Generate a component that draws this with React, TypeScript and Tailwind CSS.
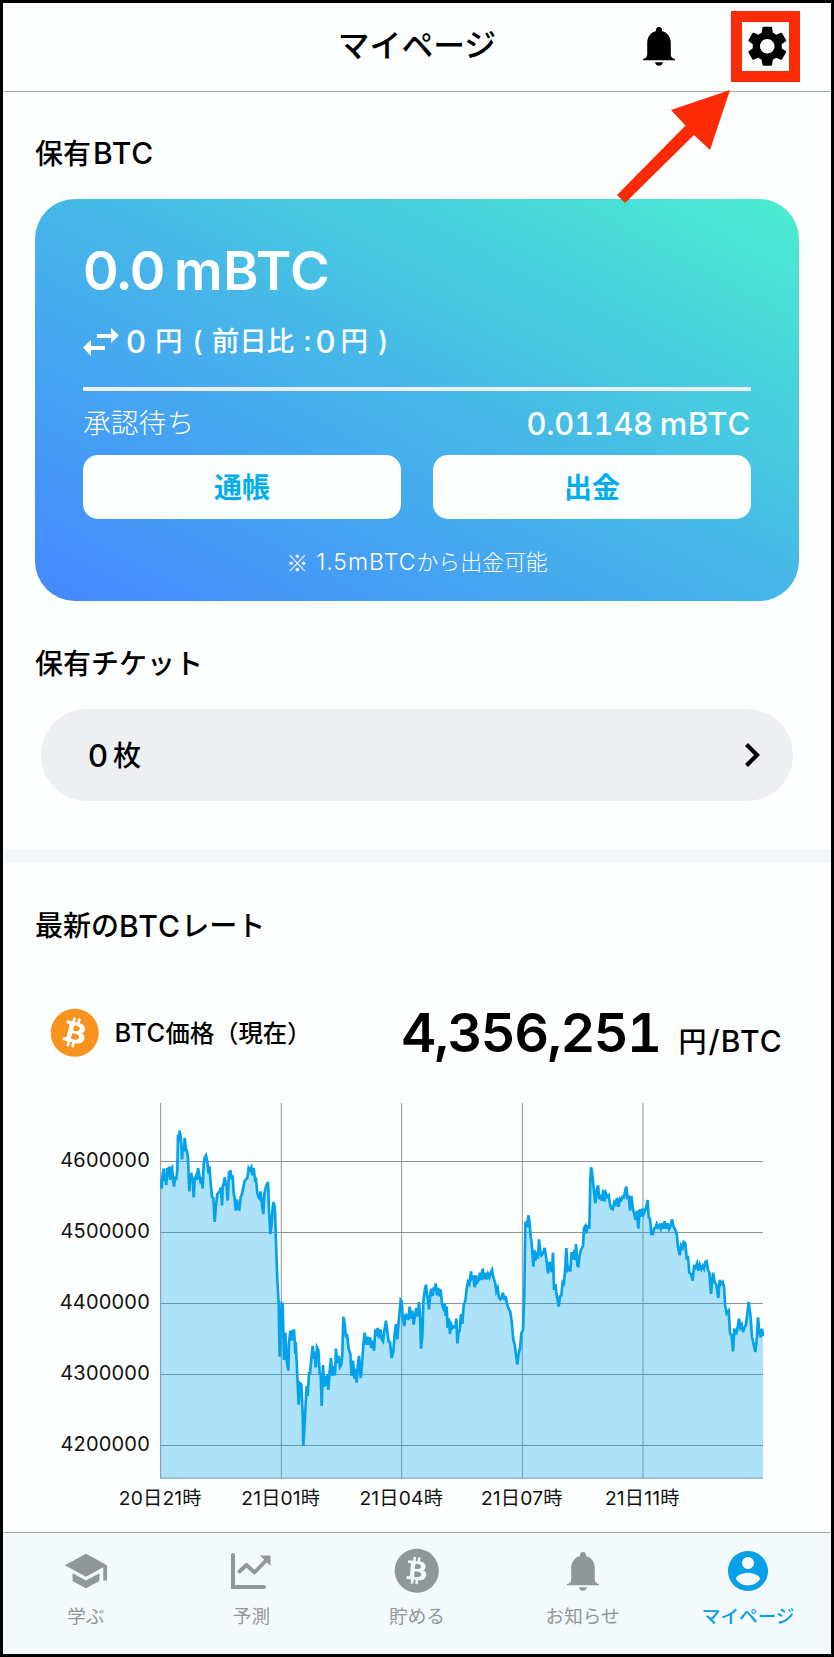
import type { ReactNode } from "react";
import { FaBitcoin } from "react-icons/fa";
import { MdSchool, MdSettings } from "react-icons/md";

// Chart space: x 61..1869 is the time span, y 39..1165 the price span.
const PRICES =
  "62,270 65,296 67,262 71,236 73,272 76,262 79,285 81,234 84,262 87,230 90,270 93,236 96,232 99,268 102,290 105,264 109,266 112,240 114,134 117,140 119,122 123,148 126,208 129,165 132,184 134,144 138,178 141,184 144,205 148,304 151,254 154,252 158,268 161,322 164,268 168,258 171,270 174,234 177,250 181,272 185,262 188,296 191,222 194,204 198,196 202,214 205,250 208,228 212,280 216,320 220,324 224,396 228,346 232,312 236,308 240,302 243,292 246,346 248,292 251,282 254,262 257,280 260,290 263,332 267,244 270,258 271,240 275,268 278,256 281,310 284,324 287,362 291,328 294,356 298,358 302,322 306,312 310,292 314,274 318,268 322,264 326,234 330,240 334,232 337,256 341,234 345,270 348,268 352,310 356,322 359,326 362,304 366,346 370,372 373,312 376,298 380,284 384,276 387,360 391,432 395,402 398,354 401,336 405,360 408,460 412,570 416,640 419,800 422,700 425,640 428,642 432,810 436,728 440,810 445,842 447,760 451,722 454,752 458,720 461,750 462,718 466,792 467,756 471,836 476,944 480,880 484,884 488,970 490,1068 495,980 500,888 503,918 507,850 510,850 514,808 518,768 521,806 524,784 527,832 531,772 535,780 539,850 542,852 545,948 549,825 553,890 556,858 559,888 562,852 565,900 569,844 573,804 577,858 581,828 585,856 588,776 592,820 596,798 600,830 604,822 607,792 610,680 614,702 618,742 621,732 626,776 631,792 635,858 639,812 643,866 646,836 650,878 654,822 657,798 662,864 666,824 670,764 674,728 678,764 682,740 686,764 690,742 694,774 698,752 702,782 706,718 710,738 713,714 717,744 721,718 725,748 729,754 733,722 738,692 742,724 746,754 750,756 755,804 760,784 764,732 768,702 772,748 776,694 779,666 782,630 785,634 788,678 793,708 797,672 801,684 805,686 809,650 813,686 817,662 821,704 825,676 829,654 833,680 837,636 840,672 843,776 847,740 850,636 854,602 858,584 861,610 865,640 867,658 871,612 874,596 878,618 881,592 885,602 887,580 891,616 895,594 899,620 902,598 906,642 910,654 914,640 917,678 920,650 923,714 926,684 930,732 934,704 938,714 942,710 946,712 949,686 952,760 955,730 959,722 963,672 967,702 971,646 976,632 980,596 984,576 988,582 993,544 996,566 1000,562 1004,592 1008,556 1012,576 1016,570 1020,548 1024,570 1028,536 1032,568 1036,548 1040,568 1044,552 1048,562 1052,548 1056,540 1060,562 1065,576 1069,604 1073,594 1077,624 1081,628 1085,622 1089,608 1093,630 1097,618 1101,642 1106,656 1111,666 1115,694 1120,750 1124,762 1128,796 1132,824 1136,790 1140,776 1144,730 1149,720 1153,610 1156,400 1160,396 1163,412 1165,376 1168,392 1172,440 1175,458 1180,530 1183,480 1187,512 1191,486 1194,506 1197,448 1200,480 1204,496 1209,490 1214,474 1219,506 1224,550 1229,516 1233,538 1236,546 1239,488 1242,600 1246,582 1250,616 1253,630 1256,650 1260,618 1264,616 1268,576 1272,580 1276,530 1279,474 1283,540 1287,534 1291,544 1295,486 1299,508 1303,480 1306,510 1308,462 1312,524 1315,532 1319,494 1324,478 1329,468 1332,414 1336,408 1339,430 1343,410 1348,412 1351,270 1353,232 1356,244 1361,294 1366,340 1370,302 1374,286 1378,328 1382,314 1386,332 1390,300 1394,334 1398,310 1402,320 1406,316 1410,342 1414,356 1418,358 1423,336 1427,342 1431,324 1436,350 1440,326 1444,330 1448,320 1452,322 1456,300 1459,290 1463,328 1466,316 1470,362 1474,318 1478,352 1483,374 1487,390 1491,362 1495,416 1499,358 1503,380 1507,356 1511,372 1515,362 1519,348 1523,330 1526,382 1530,386 1534,432 1539,432 1542,416 1546,414 1550,402 1554,412 1558,406 1562,416 1566,400 1570,416 1574,394 1579,416 1583,400 1587,418 1591,410 1596,388 1600,408 1605,418 1610,430 1614,472 1619,496 1623,466 1628,474 1631,456 1636,460 1640,504 1644,502 1648,548 1653,552 1658,572 1662,530 1666,534 1671,520 1675,542 1679,524 1684,538 1688,528 1692,536 1696,516 1700,514 1704,540 1708,548 1713,612 1719,548 1724,576 1729,584 1735,624 1739,570 1743,582 1748,576 1752,590 1756,650 1760,670 1766,662 1770,730 1775,736 1779,784 1783,716 1788,734 1793,712 1797,686 1801,712 1805,704 1809,726 1813,714 1818,704 1822,670 1826,636 1831,674 1836,740 1841,764 1846,786 1850,750 1854,682 1858,728 1862,742 1866,716 1869,738";

const Y_LABELS = ["4600000", "4500000", "4400000", "4300000", "4200000"];
const X_LABELS = ["20日21時", "21日01時", "21日04時", "21日07時", "21日11時"];

function BellIcon({ className }: { className?: string }) {
  return (
    <svg viewBox="0 0 32 39" className={className} fill="currentColor">
      <path d="M16 0c-1.8 0-3 1.3-3 3v1.1C7.800 5.500 4.200 10 4.200 16v11.500c0 2.500-1.700 4-4.200 4.400v1.300h32v-1.300c-2.500-.4-4.200-1.900-4.200-4.400V16c0-6-3.600-10.500-8.800-11.900V3c0-1.700-1.200-3-3-3z" />
      <path d="M12 35.200h8c-.6 2.300-2 3.600-4 3.600s-3.400-1.300-4-3.600z" />
    </svg>
  );
}

function TrendIcon() {
  return (
    <svg viewBox="0 0 40 36" width="40" height="36" fill="none" stroke="currentColor">
      <path d="M2 2v32h31" strokeWidth="4" strokeLinecap="round" />
      <path d="M0 34h4v2H0z" fill="currentColor" stroke="none" />
      <path d="M8.500 18.500l7-6.500 8 7.500L34.500 8" strokeWidth="3.800" strokeLinecap="round" strokeLinejoin="round" />
      <path d="M29 2.500h10.500V13z" fill="currentColor" stroke="none" />
    </svg>
  );
}

function AccountIcon() {
  return (
    <svg viewBox="0 0 24 24" width="48" height="48" fill="currentColor">
      <path d="M12 2C6.480 2 2 6.480 2 12s4.480 10 10 10 10-4.480 10-10S17.520 2 12 2zm0 3c1.660 0 3 1.340 3 3s-1.340 3-3 3-3-1.340-3-3 1.340-3 3-3zm0 14.200c-2.500 0-4.710-1.280-6-3.220.03-1.990 4-3.080 6-3.080 1.990 0 5.970 1.090 6 3.080-1.290 1.940-3.500 3.220-6 3.220z" />
    </svg>
  );
}

function SwapIcon() {
  return (
    <svg viewBox="0 0 36 28" width="36" height="28" fill="currentColor">
      <path d="M14 6h14V0l8 7.500-8 7.500V10H14zM22 18H8v-6l-8 7.500L8 28v-6h14z" />
    </svg>
  );
}

function Tab({ icon, label, active }: { icon: ReactNode; label: string; active?: boolean }) {
  return (
    <div className={active ? "flex flex-1 flex-col items-center font-medium text-[#08a0e8]" : "flex flex-1 flex-col items-center text-[#919797]"}>
      <div className="flex h-[76px] w-full items-center justify-center">{icon}</div>
      <div className="-mt-[5px] text-[18.600px] leading-6 whitespace-nowrap">{label}</div>
    </div>
  );
}

function PriceChart() {
  return (
    <svg viewBox="60 39 1812 1128" width="604" height="376" className="block shrink-0">
      <g stroke="#8e9496" strokeWidth="3">
        {[62, 424, 785, 1147, 1509].map((x) => (
          <line key={x} x1={x} x2={x} y1="39" y2="1165" />
        ))}
        {[214.500, 427.500, 640.500, 853.500, 1066.500, 1164.500].map((y) => (
          <line key={y} x1="61" x2="1869" y1={y} y2={y} />
        ))}
      </g>
      <polygon points={`62,1165 ${PRICES} 1869,1165`} fill="#08a8ee" fillOpacity="0.32" />
      <polyline points={PRICES} fill="none" stroke="#04a2ea" strokeWidth="8" strokeLinejoin="miter" />
    </svg>
  );
}

export default function App() {
  return (
    <div className="relative flex h-[1657px] w-[834px] flex-col overflow-hidden border-3 border-black bg-[#fdfefe] font-['Inter','Noto_Sans_CJK_JP',sans-serif] text-black">
      <header className="grid h-[89px] shrink-0 grid-cols-[1fr_auto_1fr] items-center border-b border-[#a4a9a9] pb-0.5">
        <div />
        <h1 className="text-[31.800px] leading-none font-medium">マイページ</h1>
        <div className="flex items-center justify-end pr-[31px]">
          <BellIcon className="mr-[56px] h-[39px] w-8" />
          <div className="flex h-[71px] w-[69px] items-center justify-center border-11 border-[#fd2b05]">
            <MdSettings className="ml-[3px] size-[48.500px] shrink-0" />
          </div>
        </div>
      </header>

      <main className="flex flex-1 flex-col">
        <section className="px-8">
          <h2 className="flex h-[107px] items-center pt-4 text-[28px] font-medium">
            保有<span className="ml-0.5 text-[30px] tracking-[0.800px]">BTC</span>
          </h2>
          <div className="h-[402px] rounded-[40px] bg-linear-to-tr/srgb from-[#4487ff] via-[#46b6e9] to-[#4bedd0] px-12 text-white">
            <div className="flex h-[114px] items-center pt-[30px] text-[54px] leading-none font-semibold">
              <span className="tracking-[-1.500px]">0.0</span>
              <span className="ml-[10px] tracking-[0.300px]">mBTC</span>
            </div>
            <div className="flex h-[74px] items-center pb-[17px] text-[27.500px] leading-none font-medium whitespace-nowrap">
              <SwapIcon />
              <span className="ml-[7px] text-[31px]">0</span>
              <span className="ml-[9px]">円</span>
              <span className="ml-[10px]">(</span>
              <span className="ml-[9px]">前日比</span>
              <span className="ml-[9px]">:</span>
              <span className="ml-[4px] text-[31px]">0</span>
              <span className="ml-[5px]">円</span>
              <span className="ml-[10px]">)</span>
            </div>
            <div className="h-1 bg-[#eceef2]" />
            <div className="flex h-16 items-center justify-between">
              <span className="pt-0.5 text-[27.800px] font-light">承認待ち</span>
              <span className="flex pt-0.5 text-[31px] font-medium whitespace-nowrap">
                <span className="tracking-[-0.400px] tabular-nums">0.01148</span>
                <span className="ml-[7px] tracking-[0.800px]">mBTC</span>
              </span>
            </div>
            <div className="grid grid-cols-2 gap-8">
              <button className="h-16 rounded-[15px] bg-[#fdfefe] pt-0.5 text-[28px] font-bold text-[#00aef0]">通帳</button>
              <button className="h-16 rounded-[15px] bg-[#fdfefe] pt-0.5 text-[28px] font-bold text-[#00aef0]">出金</button>
            </div>
            <p className="flex items-center justify-center pt-[27px] text-[21.900px] leading-8 font-light">
              <span className="font-['Noto_Sans_CJK_JP',sans-serif]">※</span>
              <span className="ml-2 text-[23px] tracking-[1px]">1.5mBTC</span>から出金可能
            </p>
          </div>
        </section>

        <section className="px-8">
          <h2 className="flex h-[108px] items-center pt-[18px] text-[28px] font-medium">保有チケット</h2>
          <div className="mx-1.5 flex h-[92px] items-center justify-between rounded-full bg-[#eeeff2] pr-[33px] pl-[47px]">
            <span className="flex items-center pt-0.5 text-[28px] font-medium">
              <span className="text-[31px]">0</span>
              <span className="ml-[5px]">枚</span>
            </span>
            <svg viewBox="0 0 16 24" width="16" height="24" fill="none" stroke="currentColor" strokeWidth="4.200">
              <path d="M2.500 1.500L13 12 2.500 22.500" />
            </svg>
          </div>
        </section>

        <div className="mt-12 h-[14px] shrink-0 bg-[#f3f8fa]" />

        <section>
          <h2 className="flex h-[126px] items-center px-8 text-[28px] font-medium">
            最新の<span className="text-[30px] tracking-[1.200px]">BTC</span>レート
          </h2>
          <div className="flex h-[90px] items-center pr-[48px] pb-0.5 pl-[47px]">
            <FaBitcoin className="size-[49.500px] text-[#f7931e]" />
            <span className="ml-[15px] flex items-center text-[24.300px] font-medium whitespace-nowrap">
              <span className="text-[25.500px] tracking-[0.400px]">BTC</span>価格（現在）
            </span>
            <span className="ml-auto flex items-baseline pb-0.5 whitespace-nowrap">
              <span className="text-[54px] font-semibold tracking-[-1.600px] tabular-nums">4,356,251</span>
              <span className="ml-[18px] text-[28px] font-medium">
                円<span className="ml-0.5 text-[30px] tracking-[1.200px]">/BTC</span>
              </span>
            </span>
          </div>
          <div className="mt-6 flex">
            <div className="w-[157px] shrink-0 pt-[21px] pr-[10px] text-right text-[20px] tracking-[0.200px] text-[#111]">
              {Y_LABELS.map((label) => (
                <div key={label} className="flex h-[71px] items-center justify-end">
                  {label}
                </div>
              ))}
            </div>
            <PriceChart />
          </div>
          <div className="flex pl-[97px] text-[19.200px] leading-none text-[#111]">
            {X_LABELS.map((label) => (
              <div key={label} className="flex h-10 w-[120.500px] items-center justify-center tracking-[0.200px] whitespace-nowrap">
                {label}
              </div>
            ))}
          </div>
        </section>
      </main>

      <nav className="flex h-[122px] shrink-0 border-t border-[#a4a9a9] bg-[#f4f9fb]">
        <Tab icon={<MdSchool className="size-[46px]" />} label="学ぶ" />
        <Tab icon={<TrendIcon />} label="予測" />
        <Tab icon={<FaBitcoin className="size-[45.500px] -rotate-8" />} label="貯める" />
        <Tab icon={<BellIcon className="h-[39px] w-8" />} label="お知らせ" />
        <Tab icon={<AccountIcon />} label="マイページ" active />
      </nav>

      <svg viewBox="0 0 114 116" width="114" height="116" className="absolute top-[86px] left-[613px]">
        <polygon points="114,1 55,21 69.500,36.500 1,106 9,114 78,46 94,61" fill="#fd2b05" />
      </svg>
    </div>
  );
}
